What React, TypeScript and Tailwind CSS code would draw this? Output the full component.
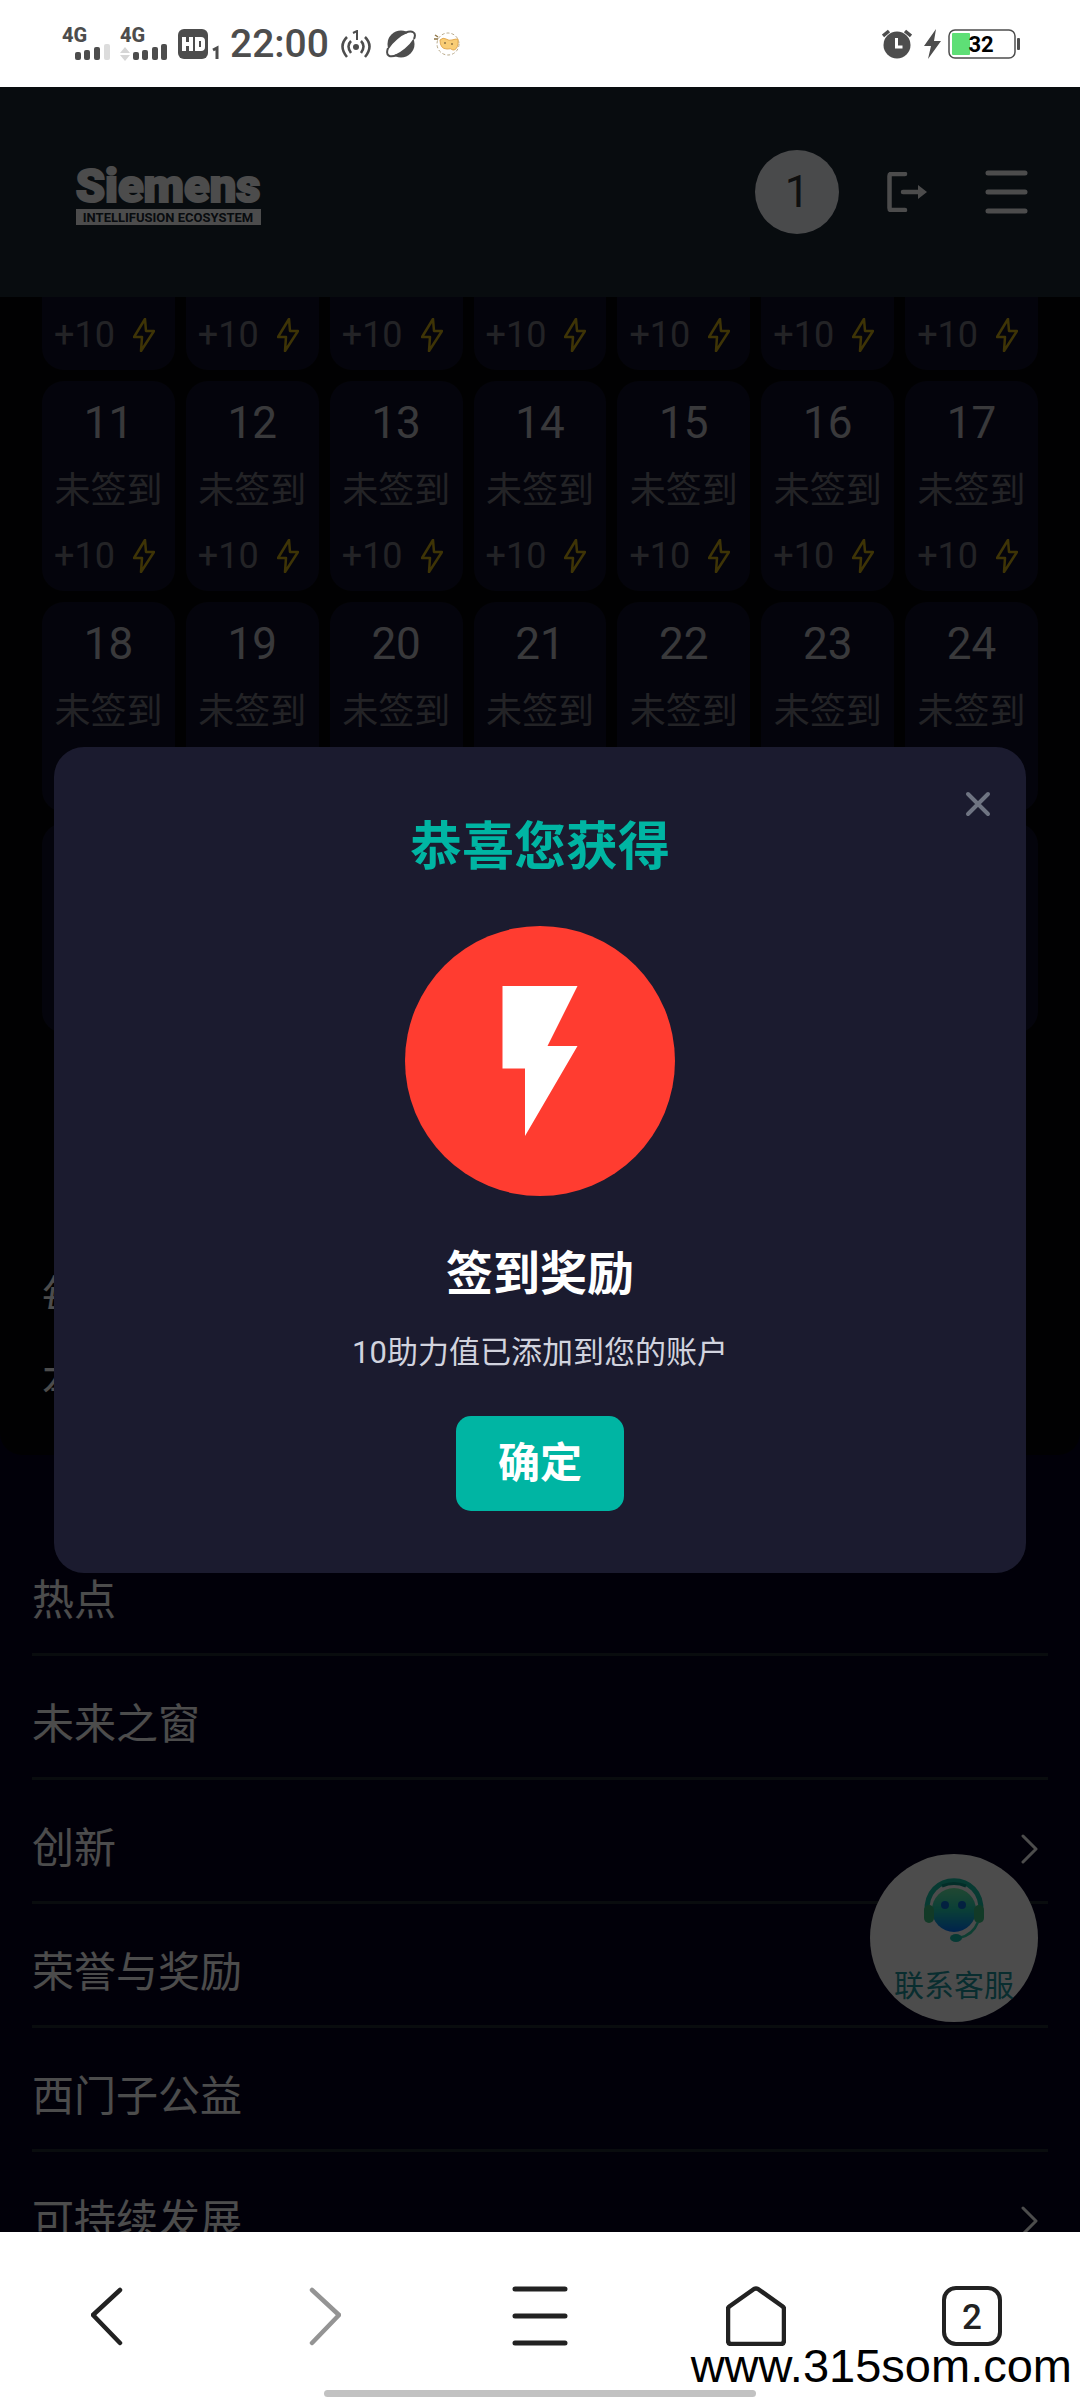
import React from "react";

const days = [4, 5, 6, 7, 8, 9, 10, 11, 12, 13, 14, 15, 16, 17, 18, 19, 20, 21, 22, 23, 24, 25, 26, 27, 28, 29, 30, 31];

const menu = [
  { label: "热点", arrow: false },
  { label: "未来之窗", arrow: false },
  { label: "创新", arrow: true },
  { label: "荣誉与奖励", arrow: false },
  { label: "西门子公益", arrow: false },
  { label: "可持续发展", arrow: true },
];

const StatusBar = () => {
  return (
    <div className="flex h-[87px] shrink-0 items-center justify-between bg-white pl-[62px] pr-[59px] text-[#4d4d4d]">
      <div className="flex items-center">
        <svg className="h-8 w-[50px] overflow-visible" viewBox="0 0 50 32" fill="currentColor">
          <text x="0" y="14" fontSize="20" fontWeight="800" fontFamily="Roboto, sans-serif">4G</text>
          <rect x="13" y="24" width="6" height="8" rx="2" />
          <rect x="22" y="22" width="6" height="10" rx="2" />
          <rect x="32" y="19" width="6" height="13" rx="2" />
          <rect x="42" y="16" width="6" height="16" rx="2" fill="#dcdcdc" />
        </svg>
        <svg className="ml-2 h-8 w-12 overflow-visible" viewBox="0 0 48 32" fill="currentColor">
          <text x="0" y="14" fontSize="20" fontWeight="800" fontFamily="Roboto, sans-serif">4G</text>
          <path d="M0 25 5 19l5 6zM0 27h10l-5 6z" fill="#d6d6d6" />
          <rect x="13" y="24" width="6" height="8" rx="2" />
          <rect x="22" y="22" width="6" height="10" rx="2" />
          <rect x="32" y="19" width="6" height="13" rx="2" />
          <rect x="41" y="16" width="6" height="16" rx="2" />
        </svg>
        <svg className="ml-[10px] h-[30px] w-[42px]" viewBox="0 0 42 30">
          <rect width="30" height="30" rx="6" fill="currentColor" />
          <path d="M6 8v14M13 8v14M6 15h7M19 10h4q2 0 2 2v6q0 2-2 2h-4z" fill="none" stroke="#fff" strokeWidth="4" />
          <path d="m35 21 4-2v11" fill="none" stroke="currentColor" strokeWidth="3" />
        </svg>
        <span className="ml-[10px] pt-[2px] text-[39px] font-medium leading-none">22:00</span>
        <svg className="ml-3 h-7 w-[30px]" viewBox="0 0 30 28" fill="none" stroke="currentColor" strokeWidth="2.500">
          <path d="M6 7q-9 9 0 20M10 11q-5 5 0 12M24 7q9 9 0 20M20 11q5 5 0 12" />
          <path d="m12 3 4-2v9" strokeWidth="2" />
          <circle cx="15" cy="17" r="3" fill="currentColor" stroke="none" />
        </svg>
        <svg className="ml-[15px] h-7 w-[30px]" viewBox="0 0 30 28">
          <circle cx="15" cy="14" r="13.500" fill="currentColor" />
          <ellipse cx="15" cy="14" rx="17" ry="6" transform="rotate(-40 15 14)" fill="#fff" />
          <path d="M19 3C26 0 31 2 28 9M11 25C4 28-1 26 2 18" fill="none" stroke="currentColor" strokeWidth="2" />
        </svg>
        <svg className="ml-[18px] h-[26px] w-[26px]" viewBox="0 0 26 26">
          <circle cx="14" cy="13" r="11" fill="#fff" stroke="#b8a98a" strokeWidth="1" strokeDasharray="3 2" />
          <path d="M6 9q3-3 6-1t6 1 6-1v5q-1 6-5 6-2-2-6-1-7 0-7-9z" fill="#f9cd75" stroke="#e3aa52" />
          <path d="M1 4l3 2M0 8h4M10 12h2M17 13h2" stroke="#8d7444" strokeWidth="1.5" />
        </svg>
      </div>
      <div className="flex items-center">
        <svg className="h-[30px] w-[30px]" viewBox="0 0 30 30">
          <circle cx="15" cy="16" r="13.5" fill="currentColor" />
          <path d="m1 7 6-5M29 7l-6-5" stroke="currentColor" strokeWidth="3.5" />
          <path d="M14.500 9v9h6" fill="none" stroke="#fff" strokeWidth="3" />
        </svg>
        <svg className="ml-3 h-[30px] w-[17px]" viewBox="0 0 17 30" fill="currentColor">
          <path d="M12 0 0 17h7L4 30l13-18h-7z" />
        </svg>
        <svg className="ml-[7px] h-[30px] w-[73px]" viewBox="0 0 73 30">
          <rect x="1" y="1" width="66" height="28" rx="6" fill="#fff" stroke="currentColor" strokeWidth="1.500" />
          <rect x="4" y="4" width="18" height="22" rx="1" fill="#5edf76" />
          <rect x="69" y="9" width="3" height="12" rx="1" fill="currentColor" />
          <text x="33" y="23" fontSize="22" fontWeight="700" textAnchor="middle" fontFamily="Roboto, sans-serif" fill="#000">32</text>
        </svg>
      </div>
    </div>
  );
};

const Header = () => {
  return (
    <header className="relative z-10 flex h-[210px] shrink-0 items-center justify-between bg-[#1b2835] pl-[76px] pr-[52px] text-white">
      <svg className="h-[66px] w-[185px] overflow-visible" viewBox="0 0 185 66" role="img" aria-label="Siemens Intellifusion Ecosystem">
        <text x="92" y="43" fontSize="47" fontWeight="900" textAnchor="middle" fontFamily="Roboto, sans-serif" fill="#fff" stroke="#fff" strokeWidth="2">Siemens</text>
        <rect y="50" width="185" height="16" fill="#fff" />
        <text x="92" y="63" fontSize="13" fontWeight="700" textAnchor="middle" fontFamily="Roboto, sans-serif" fill="#1b2835">INTELLIFUSION ECOSYSTEM</text>
      </svg>
      <div className="flex items-center">
        <a href="#profile" className="flex h-[84px] w-[84px] items-center justify-center rounded-full bg-[#f5f8fa] text-[44px] leading-none text-[#333]">
          1
        </a>
        <button type="button" aria-label="退出" className="ml-12">
          <svg className="h-10 w-10" viewBox="0 0 40 40" fill="none" stroke="#fff" strokeWidth="4.500" strokeLinecap="round" strokeLinejoin="round">
            <path d="M18 2H4Q2.500 2 2.500 4v32q0 2 1.500 2h14M16 20h16" />
            <path d="M31 13v14l9-7z" fill="#fff" stroke="none" />
          </svg>
        </button>
        <button type="button" aria-label="菜单" className="ml-[58px]">
          <svg className="h-11 w-[43px]" viewBox="0 0 43 44" stroke="#fff" strokeWidth="5" strokeLinecap="round">
            <path d="M3 3h37M3 22h37M3 41h37" />
          </svg>
        </button>
      </div>
    </header>
  );
};

const DayCard = ({ day }: { day: number }) => {
  return (
    <div className="flex h-[210px] flex-col rounded-[22px] bg-[#10102a] px-3 pt-3 text-[36px] text-[#77777f]">
      <div className="text-center text-[44px] leading-[60px] text-[#c0c0c6]">{day}</div>
      <div className="whitespace-nowrap text-center leading-[76px]">未签到</div>
      <div className="flex items-center justify-between pr-2 leading-[54px]">
        <span>+10</span>
        <svg className="h-[34px] w-[22px]" viewBox="0 0 22 34" fill="none" stroke="#d1ad14" strokeWidth="2.500" strokeLinejoin="round">
          <path d="M12 1 1 19h8l-1 14 13-20h-8z" />
        </svg>
      </div>
    </div>
  );
};

const Modal = () => {
  return (
    <div className="absolute inset-0 z-20 flex items-center justify-center bg-black/70 px-[54px]">
      <div role="dialog" aria-labelledby="reward-title" className="relative flex w-full flex-col items-center rounded-[30px] bg-[#1b1b2f] px-8 pb-[62px] pt-[65px]">
        <button type="button" aria-label="关闭" className="absolute right-[35px] top-[44px]">
          <svg className="h-[26px] w-[26px]" viewBox="0 0 26 26" stroke="#6f7482" strokeWidth="4" strokeLinecap="round">
            <path d="m3 3 20 20M23 3 3 23" />
          </svg>
        </button>
        <h2 id="reward-title" className="text-[52px] font-bold leading-[72px] text-[#00b5a3]">恭喜您获得</h2>
        <div className="mt-[42px] flex h-[270px] w-[270px] items-center justify-center rounded-full bg-[#ff3c30]">
          <svg className="h-[180px] w-[180px]" viewBox="0 0 24 24" fill="#fff">
            <path d="M7 2v11h3v9l7-12h-4l4-8z" />
          </svg>
        </div>
        <h3 className="mt-[46px] text-[47px] font-bold leading-[64px] text-white">签到奖励</h3>
        <p className="mt-[23px] text-[31px] leading-[48px] text-[#d1d3de]">10助力值已添加到您的账户</p>
        <button type="button" className="mt-[39px] rounded-[15px] bg-[#00b5a3] px-[42px] pb-[17px] pt-[18px] text-[42px] font-bold leading-[60px] text-white">
          确定
        </button>
      </div>
    </div>
  );
};

const BottomBar = () => {
  return (
    <nav className="relative grid h-[168px] shrink-0 grid-cols-5 bg-white text-[#222]">
      <button type="button" aria-label="后退" className="flex items-center justify-center">
        <svg className="h-[60px] w-[34px]" viewBox="0 0 34 60" fill="none" stroke="currentColor" strokeWidth="4.500" strokeLinecap="round" strokeLinejoin="round">
          <path d="M29 4 2 29l27 28" />
        </svg>
      </button>
      <button type="button" aria-label="前进" className="flex items-center justify-center">
        <svg className="h-[60px] w-[34px]" viewBox="0 0 34 60" fill="none" stroke="#949494" strokeWidth="4.500" strokeLinecap="round" strokeLinejoin="round">
          <path d="m5 4 27 25L5 57" />
        </svg>
      </button>
      <button type="button" aria-label="菜单" className="flex items-center justify-center">
        <svg className="h-[60px] w-[56px]" viewBox="0 0 56 60" stroke="currentColor" strokeWidth="5" strokeLinecap="round">
          <path d="M3 3h50M3 30h50M3 57h50" />
        </svg>
      </button>
      <button type="button" aria-label="主页" className="flex items-center justify-center">
        <svg className="h-[60px] w-[60px]" viewBox="0 0 60 60" fill="none" stroke="currentColor" strokeWidth="4.500" strokeLinejoin="round">
          <path d="M28 3q2-1 4 0l24 17q2 1 2 3v31q0 4-3 4H5q-3 0-3-4V23q0-2 2-3z" />
        </svg>
      </button>
      <button type="button" aria-label="标签页" className="flex items-center justify-center">
        <span className="flex h-[60px] w-[60px] items-center justify-center rounded-[14px] border-4 border-current pt-[2px] text-[35px] font-medium leading-none">2</span>
      </button>
      <div className="absolute bottom-[3px] left-[30%] h-[7px] w-[40%] rounded-full bg-[#c2c2c2]" />
      <div className="absolute bottom-[7px] right-2 font-['Liberation_Sans',sans-serif] text-[47px] leading-[54px] text-black">www.315som.com</div>
    </nav>
  );
};

const App = () => {
  return (
    <div className="flex h-screen flex-col overflow-hidden bg-white font-[Roboto,'Noto_Sans_CJK_SC',sans-serif]">
      <StatusBar />
      <div className="relative flex min-h-0 flex-1 flex-col overflow-hidden bg-[#06031f]">
        <Header />
        <main className="-mt-[137px]">
          <section className="rounded-b-[22px] bg-[#060609] px-[42px] pb-[32px] text-white">
            <div className="grid grid-cols-7 gap-[11px]">
              {days.map((day) => (
                <DayCard key={day} day={day} />
              ))}
            </div>
            <div className="pt-[222px] text-[42px] leading-[84px]">
              <p>每日签到可获得助力值奖励</p>
              <p>本月连续签到奖励更多</p>
            </div>
          </section>
          <ul className="mt-[77px] px-8">
            {menu.map((item) => (
              <li key={item.label}>
                <a href="#menu" className="flex h-[124px] items-center justify-between border-b-[3px] border-[#202a30] pr-[10px] pt-4 text-[42px] leading-[60px] text-white">
                  {item.label}
                  {item.arrow && (
                    <svg className="h-[30px] w-[17px]" viewBox="0 0 17 30" fill="none" stroke="#fff" strokeWidth="3" strokeLinecap="round" strokeLinejoin="round">
                      <path d="m2 2 13 13L2 28" />
                    </svg>
                  )}
                </a>
              </li>
            ))}
          </ul>
        </main>
        <a href="#service" className="absolute bottom-[210px] right-[42px] z-10 flex h-[168px] w-[168px] flex-col items-center rounded-full bg-white pt-6 text-[30px] text-[#20989f]">
          <svg className="h-[65px] w-[62px]" viewBox="0 0 62 65" fill="none">
            <defs>
              <linearGradient id="face" x1="0" y1="0" x2="0" y2="1">
                <stop offset="0" stopColor="#6ff0a8" />
                <stop offset=".5" stopColor="#22d3b8" />
                <stop offset="1" stopColor="#0074ff" />
              </linearGradient>
            </defs>
            <path d="M4 35C1 -8 61 -8 58 35" stroke="#18c4a8" strokeWidth="5" />
            <path d="M19 8q12-5 24 0" stroke="#0c9686" strokeWidth="3" />
            <circle cx="31" cy="32" r="22" fill="url(#face)" />
            <rect x="1" y="27" width="10" height="18" rx="5" fill="#3cc483" />
            <rect x="51" y="27" width="10" height="18" rx="5" fill="#3cc483" />
            <path d="M55 44Q50 57 36 60" stroke="#2fd0a8" strokeWidth="2.500" />
            <ellipse cx="33" cy="60" rx="6" ry="4" fill="#16c0b0" />
            <circle cx="22" cy="27" r="4" fill="#0a70d8" />
            <circle cx="39" cy="27" r="4" fill="#0a70d8" />
          </svg>
          <span className="mt-[22px] leading-[42px]">联系客服</span>
        </a>
        <Modal />
      </div>
      <BottomBar />
    </div>
  );
};

export default App;
